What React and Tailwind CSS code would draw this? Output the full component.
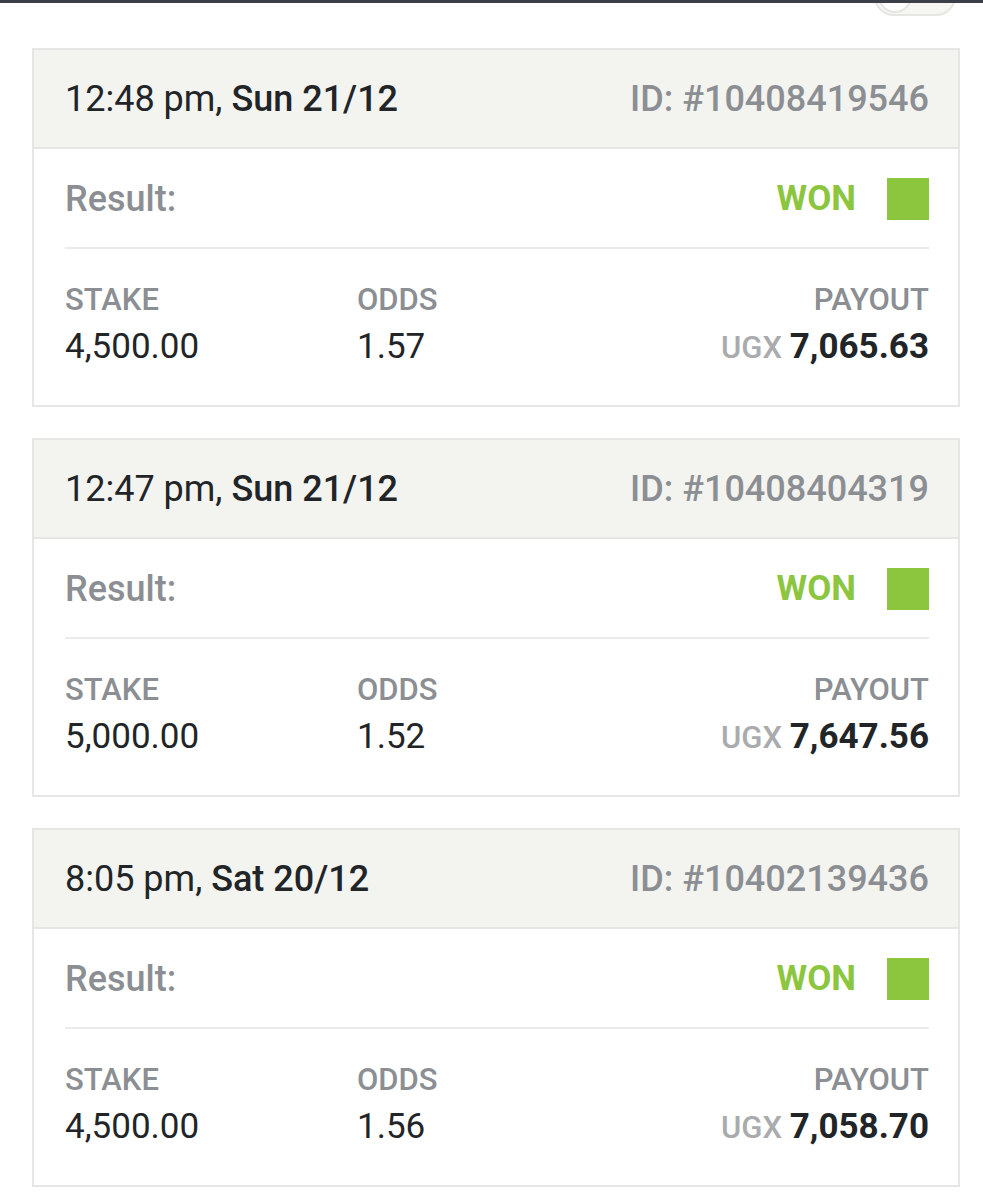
import React from 'react';

const bets = [
  { time: '12:48 pm,', day: 'Sun 21/12', id: '10408419546', stake: '4,500.00', odds: '1.57', payout: '7,065.63' },
  { time: '12:47 pm,', day: 'Sun 21/12', id: '10408404319', stake: '5,000.00', odds: '1.52', payout: '7,647.56' },
  { time: '8:05 pm,', day: 'Sat 20/12', id: '10402139436', stake: '4,500.00', odds: '1.56', payout: '7,058.70' },
];

function BetCard({ bet }) {
  return (
    <div className="border-2 border-[#e6e6e4] bg-white">
      {/* header */}
      <div className="h-[99px] bg-[#f3f3ef] border-b-2 border-[#e6e6e4] flex items-center justify-between pl-[31px] pr-[29px]">
        <div className="text-[36px] text-[#222528]">
          {bet.time} <span className="font-medium">{bet.day}</span>
        </div>
        <div className="text-[36px] font-medium text-[#8b8e92]">ID: #{bet.id}</div>
      </div>

      {/* result */}
      <div className="ml-[31px] mr-[29px] h-[100px] pt-[2px] border-b-2 border-[#ebebeb] flex items-center justify-between">
        <span className="text-[36px] font-medium text-[#8b8e92]">Result:</span>
        <div className="flex items-center gap-[31px]">
          <span className="text-[35px] font-bold text-[#8cc63f]">WON</span>
          <div className="w-[42px] h-[42px] bg-[#8cc63f]" />
        </div>
      </div>

      {/* stake / odds / payout */}
      <div className="ml-[31px] mr-[29px] pt-[33px] pb-[32px] flex">
        <div className="w-[292px]">
          <div className="text-[31px] leading-[36px] font-medium text-[#8b8e92]">STAKE</div>
          <div className="mt-[9px] text-[35px] leading-[40px] text-[#222528]">{bet.stake}</div>
        </div>
        <div className="flex-1">
          <div className="text-[31px] leading-[36px] font-medium text-[#8b8e92]">ODDS</div>
          <div className="mt-[9px] text-[35px] leading-[40px] text-[#222528]">{bet.odds}</div>
        </div>
        <div className="text-right">
          <div className="text-[31px] leading-[36px] font-medium text-[#8b8e92]">PAYOUT</div>
          <div className="mt-[9px] leading-[40px]">
            <span className="text-[31px] font-medium text-[#a9abad]">UGX </span>
            <span className="text-[35px] font-bold text-[#222528]">{bet.payout}</span>
          </div>
        </div>
      </div>
    </div>
  );
}

export default function App() {
  return (
    <div className="w-[983px] h-[1200px] overflow-hidden bg-white" style={{ fontFamily: 'Roboto, "Liberation Sans", sans-serif' }}>
      <div className="h-[3px] bg-[#3b4048]" />
      <div className="h-[45px] overflow-hidden flex justify-end pr-[27px]">
        <div className="w-[82px] h-[40px] -mt-[27px] rounded-full border-2 border-[#e6e6e2] bg-[#f6f6f2] flex items-center pl-[2px]">
          <div className="w-[34px] h-[34px] rounded-full border-2 border-[#e6e6e2] bg-white" />
        </div>
      </div>
      <div className="ml-[32px] w-[928px] flex flex-col gap-[31px]">
        {bets.map((bet) => (
          <BetCard key={bet.id} bet={bet} />
        ))}
      </div>
    </div>
  );
}
